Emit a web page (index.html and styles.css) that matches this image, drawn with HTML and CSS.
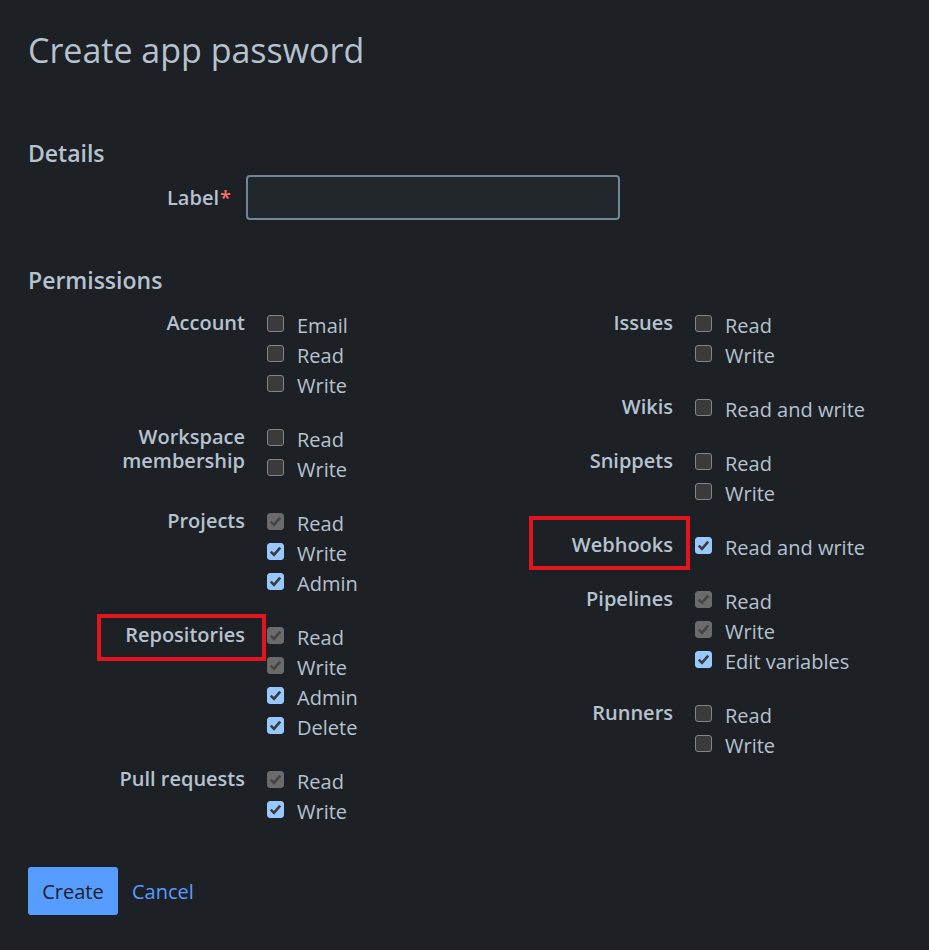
FILE: index.html
```html
<!DOCTYPE html>
<html lang="en">
<head>
<meta charset="utf-8">
<title>Create app password</title>
<link rel="stylesheet" href="styles.css">
</head>
<body>
<main class="page">
  <h1 class="title">Create app password</h1>

  <h2 class="section">Details</h2>
  <div class="field">
    <label class="field-label" for="lbl">Label<span class="req">*</span></label>
    <input class="text-input" id="lbl" type="text">
  </div>

  <h2 class="section section-perm">Permissions</h2>
  <div class="perms">
    <div class="col">
      <div class="group">
        <div class="glabel">Account</div>
        <div class="opts">
          <label class="opt"><span class="box"></span>Email</label>
          <label class="opt"><span class="box"></span>Read</label>
          <label class="opt"><span class="box"></span>Write</label>
        </div>
      </div>
      <div class="group">
        <div class="glabel">Workspace<br>membership</div>
        <div class="opts">
          <label class="opt"><span class="box"></span>Read</label>
          <label class="opt"><span class="box"></span>Write</label>
        </div>
      </div>
      <div class="group">
        <div class="glabel">Projects</div>
        <div class="opts">
          <label class="opt"><span class="box dis"><svg viewBox="0 0 17 17"><polyline points="3.8,8.6 7,11.8 13.2,4.6"/></svg></span>Read</label>
          <label class="opt"><span class="box on"><svg viewBox="0 0 17 17"><polyline points="3.8,8.6 7,11.8 13.2,4.6"/></svg></span>Write</label>
          <label class="opt"><span class="box on"><svg viewBox="0 0 17 17"><polyline points="3.8,8.6 7,11.8 13.2,4.6"/></svg></span>Admin</label>
        </div>
      </div>
      <div class="group">
        <div class="glabel">Repositories<span class="mark mark-repo"></span></div>
        <div class="opts">
          <label class="opt"><span class="box dis"><svg viewBox="0 0 17 17"><polyline points="3.8,8.6 7,11.8 13.2,4.6"/></svg></span>Read</label>
          <label class="opt"><span class="box dis"><svg viewBox="0 0 17 17"><polyline points="3.8,8.6 7,11.8 13.2,4.6"/></svg></span>Write</label>
          <label class="opt"><span class="box on"><svg viewBox="0 0 17 17"><polyline points="3.8,8.6 7,11.8 13.2,4.6"/></svg></span>Admin</label>
          <label class="opt"><span class="box on"><svg viewBox="0 0 17 17"><polyline points="3.8,8.6 7,11.8 13.2,4.6"/></svg></span>Delete</label>
        </div>
      </div>
      <div class="group">
        <div class="glabel">Pull requests</div>
        <div class="opts">
          <label class="opt"><span class="box dis"><svg viewBox="0 0 17 17"><polyline points="3.8,8.6 7,11.8 13.2,4.6"/></svg></span>Read</label>
          <label class="opt"><span class="box on"><svg viewBox="0 0 17 17"><polyline points="3.8,8.6 7,11.8 13.2,4.6"/></svg></span>Write</label>
        </div>
      </div>
    </div>

    <div class="col">
      <div class="group">
        <div class="glabel">Issues</div>
        <div class="opts">
          <label class="opt"><span class="box"></span>Read</label>
          <label class="opt"><span class="box"></span>Write</label>
        </div>
      </div>
      <div class="group">
        <div class="glabel">Wikis</div>
        <div class="opts">
          <label class="opt"><span class="box"></span>Read and write</label>
        </div>
      </div>
      <div class="group">
        <div class="glabel">Snippets</div>
        <div class="opts">
          <label class="opt"><span class="box"></span>Read</label>
          <label class="opt"><span class="box"></span>Write</label>
        </div>
      </div>
      <div class="group">
        <div class="glabel">Webhooks<span class="mark mark-hook"></span></div>
        <div class="opts">
          <label class="opt"><span class="box on"><svg viewBox="0 0 17 17"><polyline points="3.8,8.6 7,11.8 13.2,4.6"/></svg></span>Read and write</label>
        </div>
      </div>
      <div class="group">
        <div class="glabel">Pipelines</div>
        <div class="opts">
          <label class="opt"><span class="box dis"><svg viewBox="0 0 17 17"><polyline points="3.8,8.6 7,11.8 13.2,4.6"/></svg></span>Read</label>
          <label class="opt"><span class="box dis"><svg viewBox="0 0 17 17"><polyline points="3.8,8.6 7,11.8 13.2,4.6"/></svg></span>Write</label>
          <label class="opt"><span class="box on"><svg viewBox="0 0 17 17"><polyline points="3.8,8.6 7,11.8 13.2,4.6"/></svg></span>Edit variables</label>
        </div>
      </div>
      <div class="group">
        <div class="glabel">Runners</div>
        <div class="opts">
          <label class="opt"><span class="box"></span>Read</label>
          <label class="opt"><span class="box"></span>Write</label>
        </div>
      </div>
    </div>
  </div>

  <div class="actions">
    <button class="btn-primary" type="button">Create</button>
    <a class="link" href="#">Cancel</a>
  </div>
</main>
</body>
</html>
```
FILE: styles.css
```css
html, body {
  margin: 0;
  padding: 0;
  background: #1d2025;
}
body {
  font-family: "Open Sans", "Noto Sans", sans-serif;
  color: #b6c2cf;
}
.page {
  padding: 30px 28px 0 28px;
  width: 873px;
}
.title {
  margin: 0;
  font-size: 34px;
  line-height: 40px;
  font-weight: 500;
  color: #b6c2cf;
}
.section {
  margin: 68px 0 0 0;
  font-size: 23px;
  line-height: 30px;
  font-weight: 600;
  color: #b6c2cf;
}
.section-perm {
  margin-top: 45px;
}
.field {
  display: flex;
  align-items: center;
  margin-top: 7px;
}
.field-label {
  width: 203px;
  text-align: right;
  font-size: 20px;
  font-weight: 600;
  padding-right: 15px;
}
.req {
  color: #f87168;
  margin-left: 1px;
}
.text-input {
  box-sizing: border-box;
  width: 374px;
  height: 45px;
  background: #22272b;
  border: 2px solid #738496;
  border-radius: 4px;
  color: #b6c2cf;
  font-size: 20px;
  padding: 0 10px;
  outline: none;
}
.perms {
  display: grid;
  grid-template-columns: 428px 428px;
  margin-top: 16px;
}
.col {
  display: flex;
  flex-direction: column;
  gap: 24px;
}
.group {
  display: grid;
  grid-template-columns: 217px auto;
  column-gap: 22px;
  align-items: start;
}
.glabel {
  position: relative;
  text-align: right;
  font-size: 20px;
  font-weight: 600;
  line-height: 24px;
}
.opts {
  display: flex;
  flex-direction: column;
}
.opt {
  display: flex;
  align-items: flex-start;
  gap: 13px;
  font-size: 20px;
  line-height: 30px;
  height: 30px;
}
.box {
  box-sizing: border-box;
  flex: none;
  width: 17px;
  height: 17px;
  margin-top: 4px;
  border-radius: 3px;
  background: #3b3b3b;
  border: 1px solid #858585;
  display: flex;
}
.box svg {
  width: 17px;
  height: 17px;
  margin: -1px;
}
.box polyline {
  fill: none;
  stroke: #3b3b3b;
  stroke-width: 2.6;
  stroke-linecap: butt;
  stroke-linejoin: miter;
}
.box.on {
  background: #99c8ff;
  border-color: #99c8ff;
}
.box.dis {
  background: #6b6b6b;
  border-color: #6b6b6b;
}
.box.dis polyline {
  stroke: #454545;
}
.mark {
  position: absolute;
  box-sizing: border-box;
  border: 4px solid #e3141e;
  pointer-events: none;
}
.mark-repo {
  left: 69px;
  top: -9px;
  width: 169px;
  height: 47px;
}
.mark-hook {
  left: 73px;
  top: -17px;
  width: 161px;
  height: 54px;
}
.actions {
  display: flex;
  align-items: center;
  gap: 14px;
  margin-top: 40px;
}
.btn-primary {
  box-sizing: border-box;
  width: 90px;
  height: 48px;
  border: none;
  border-radius: 3px;
  background: #579dff;
  color: #1d2125;
  font-family: "Open Sans", "Noto Sans", sans-serif;
  font-size: 20px;
  padding: 0;
}
.link {
  color: #579dff;
  text-decoration: none;
  font-size: 20px;
}
```
